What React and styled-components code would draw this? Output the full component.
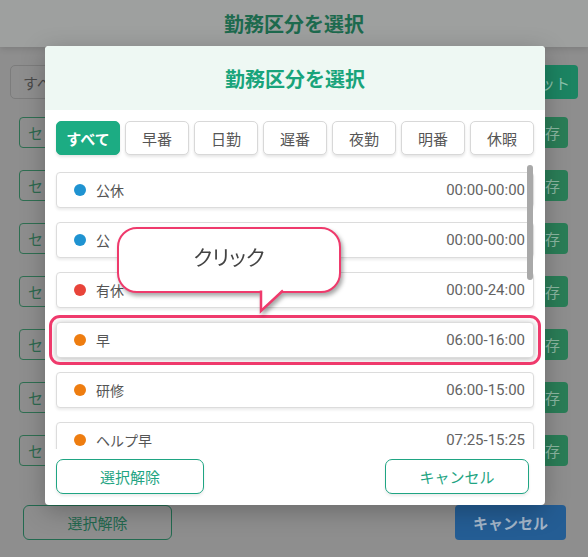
import styled, { createGlobalStyle } from 'styled-components'

const GlobalStyle = createGlobalStyle`
  html, body {
    margin: 0;
    padding: 0;
  }
  body {
    font-family: Roboto, "Noto Sans CJK JP", sans-serif;
    background: #8e8e8e;
  }
`

const tabs = ['すべて', '早番', '日勤', '遅番', '夜勤', '明番', '休暇']

const shifts = [
  { name: '公休', time: '00:00-00:00', color: '#1f93d1' },
  { name: '公', time: '00:00-00:00', color: '#1f93d1' },
  { name: '有休', time: '00:00-24:00', color: '#e8443a' },
  { name: '早', time: '06:00-16:00', color: '#ee7d10', highlighted: true },
  { name: '研修', time: '06:00-15:00', color: '#ee7d10' },
  { name: 'ヘルプ早', time: '07:25-15:25', color: '#ee7d10' },
  { name: 'ヘルプ遅', time: '11:00-20:00', color: '#ee7d10' },
]

export default function App() {
  return (
    <Page>
      <GlobalStyle />
      <PageHeader>勤務区分を選択</PageHeader>
      <PageBody>
        <FilterRow>
          <SelectBox>すべて</SelectBox>
          <SolidButton tone="green">リセット</SolidButton>
        </FilterRow>
        <RowList>
          {[0, 1, 2, 3, 4, 5, 6].map(i => (
            <PageRow key={i}>
              <OutlineSmall>セット</OutlineSmall>
              <SolidButton tone="save">保存</SolidButton>
            </PageRow>
          ))}
        </RowList>
        <PageFooter>
          <PageOutlineButton>選択解除</PageOutlineButton>
          <SolidButton tone="blue" wide>キャンセル</SolidButton>
        </PageFooter>
      </PageBody>

      <Modal>
        <ModalHeader>勤務区分を選択</ModalHeader>
        <TabBar>
          {tabs.map((t, i) => (
            <Tab key={t} active={i === 0}>{t}</Tab>
          ))}
        </TabBar>
        <ListViewport>
          <ShiftList>
            {shifts.map((s, i) => (
              <ShiftItem key={i} highlighted={s.highlighted}>
                <Dot color={s.color} />
                <ShiftName>{s.name}</ShiftName>
                <ShiftTime>{s.time}</ShiftTime>
              </ShiftItem>
            ))}
          </ShiftList>
          <ScrollThumb />
        </ListViewport>
        <ModalFooter>
          <ModalButton>選択解除</ModalButton>
          <ModalButton narrow>キャンセル</ModalButton>
        </ModalFooter>

        <Bubble>
          クリック
          <BubbleTail width="30" height="26" viewBox="0 0 30 26">
            <polygon points="4,0 4,22 26,0" fill="#fff" />
            <polyline
              points="3,2.5 3,23 25,2.5"
              fill="none"
              stroke="#ef3a6c"
              strokeWidth="2.5"
              strokeLinejoin="miter"
            />
          </BubbleTail>
        </Bubble>
      </Modal>
    </Page>
  )
}

const Page = styled.div`
  position: relative;
  width: 588px;
  height: 557px;
  overflow: hidden;
  background: #8e8e8e;
`

const PageHeader = styled.header`
  height: 47px;
  display: flex;
  align-items: center;
  justify-content: center;
  background: #9ea09f;
  box-shadow: 0 2px 6px rgba(0, 0, 0, 0.12);
  color: #1d6a4e;
  font-size: 20px;
  font-weight: 700;
`

const PageBody = styled.div`
  display: flex;
  flex-direction: column;
  padding: 18px 10px 0;
`

const FilterRow = styled.div`
  display: flex;
  justify-content: space-between;
  height: 34px;
`

const SelectBox = styled.div`
  width: 200px;
  box-sizing: border-box;
  display: flex;
  align-items: center;
  padding: 0 12px;
  border: 1px solid #7c7c7c;
  border-radius: 5px;
  color: #4a4a4a;
  font-size: 15px;
`

const toneColors = {
  green: ['#1c8462', '#8cc3ae'],
  save: ['#2a7d57', '#8cb7a2'],
  blue: ['#245d94', '#a3b5c8'],
}

const SolidButton = styled.div`
  display: flex;
  align-items: center;
  justify-content: center;
  box-sizing: border-box;
  padding: 0 ${p => (p.wide ? 18 : 8)}px;
  border-radius: 4px;
  background: ${p => toneColors[p.tone][0]};
  color: ${p => toneColors[p.tone][1]};
  font-size: 15px;
  font-weight: ${p => (p.wide ? 700 : 400)};
`

const RowList = styled.div`
  display: flex;
  flex-direction: column;
  gap: 22px;
  margin-top: 18px;
  padding: 0 10px 0 9px;
`

const PageRow = styled.div`
  display: flex;
  justify-content: space-between;
  height: 31px;
`

const OutlineSmall = styled.div`
  display: flex;
  align-items: center;
  padding: 0 8px;
  border: 1px solid #2f6f52;
  border-radius: 4px;
  color: #2e6a50;
  font-size: 15px;
`

const PageFooter = styled.div`
  display: flex;
  justify-content: space-between;
  height: 35px;
  margin-top: 39px;
  padding: 0 12px 0 13px;
`

const PageOutlineButton = styled.div`
  width: 149px;
  box-sizing: border-box;
  display: flex;
  align-items: center;
  justify-content: center;
  border: 1px solid #236a50;
  border-radius: 6px;
  color: #23684e;
  font-size: 15px;
`

const Modal = styled.div`
  position: absolute;
  left: 45px;
  top: 46px;
  width: 500px;
  height: 459px;
  display: flex;
  flex-direction: column;
  background: #fff;
  border-radius: 4px;
  box-shadow: 0 6px 24px rgba(0, 0, 0, 0.25);
`

const ModalHeader = styled.div`
  height: 64px;
  display: flex;
  align-items: center;
  justify-content: center;
  background: #eef8f3;
  border-radius: 4px 4px 0 0;
  color: #19a47b;
  font-size: 20px;
  font-weight: 700;
`

const TabBar = styled.div`
  display: grid;
  grid-template-columns: repeat(7, 1fr);
  gap: 5px;
  margin: 11px 11px 0;
  height: 34px;
`

const Tab = styled.div`
  display: flex;
  align-items: center;
  justify-content: center;
  box-sizing: border-box;
  border: 1px solid ${p => (p.active ? '#1cac83' : '#d8d8d8')};
  border-radius: 5px;
  background: ${p => (p.active ? '#1cac83' : '#fff')};
  box-shadow: 0 2px 3px rgba(0, 0, 0, 0.1);
  color: ${p => (p.active ? '#fff' : '#555')};
  font-size: 15px;
  font-weight: ${p => (p.active ? 700 : 400)};
`

const ListViewport = styled.div`
  position: relative;
  height: 284px;
  margin-top: 10px;
  overflow: hidden;
`

const ShiftList = styled.div`
  display: flex;
  flex-direction: column;
  gap: 14px;
  padding: 7px 11px 0;
`

const ShiftItem = styled.div`
  flex: none;
  height: 36px;
  box-sizing: border-box;
  display: flex;
  align-items: center;
  padding: 0 8px 0 17px;
  border: 1px solid #dcdcdc;
  border-radius: 4px;
  background: #fff;
  box-shadow: ${p =>
    p.highlighted
      ? '0 1px 6px rgba(0, 0, 0, 0.28)'
      : '0 2px 3px rgba(0, 0, 0, 0.08)'};
  outline: ${p => (p.highlighted ? '3px solid #ef3a6c' : 'none')};
  outline-offset: 4px;
`

const Dot = styled.span`
  width: 12px;
  height: 12px;
  border-radius: 50%;
  background: ${p => p.color};
`

const ShiftName = styled.span`
  margin-left: 10px;
  color: #555;
  font-size: 14px;
`

const ShiftTime = styled.span`
  margin-left: auto;
  color: #636363;
  font-size: 15px;
`

const ScrollThumb = styled.div`
  position: absolute;
  top: 0;
  right: 12px;
  width: 6px;
  height: 115px;
  border-radius: 3px;
  background: #a9a9a9;
`

const ModalFooter = styled.div`
  display: flex;
  justify-content: space-between;
  margin-top: 10px;
  padding: 0 16px 0 11px;
`

const ModalButton = styled.div`
  width: ${p => (p.narrow ? 144 : 148)}px;
  height: 35px;
  box-sizing: border-box;
  display: flex;
  align-items: center;
  justify-content: center;
  border: 1px solid #1fa583;
  border-radius: 7px;
  background: #fff;
  box-shadow: 0 2px 3px rgba(0, 0, 0, 0.08);
  color: #1fa583;
  font-size: 15px;
`

const Bubble = styled.div`
  position: absolute;
  left: 72px;
  top: 181px;
  width: 224px;
  height: 66px;
  box-sizing: border-box;
  display: flex;
  align-items: center;
  justify-content: center;
  padding-bottom: 8px;
  border: 2.5px solid #ef3a6c;
  border-radius: 20px;
  background: #fff;
  filter: drop-shadow(2px 3px 2px rgba(0, 0, 0, 0.35));
  color: #444;
  font-size: 21px;
  font-feature-settings: "palt";
`

const BubbleTail = styled.svg`
  position: absolute;
  left: 139px;
  top: 59px;
`
